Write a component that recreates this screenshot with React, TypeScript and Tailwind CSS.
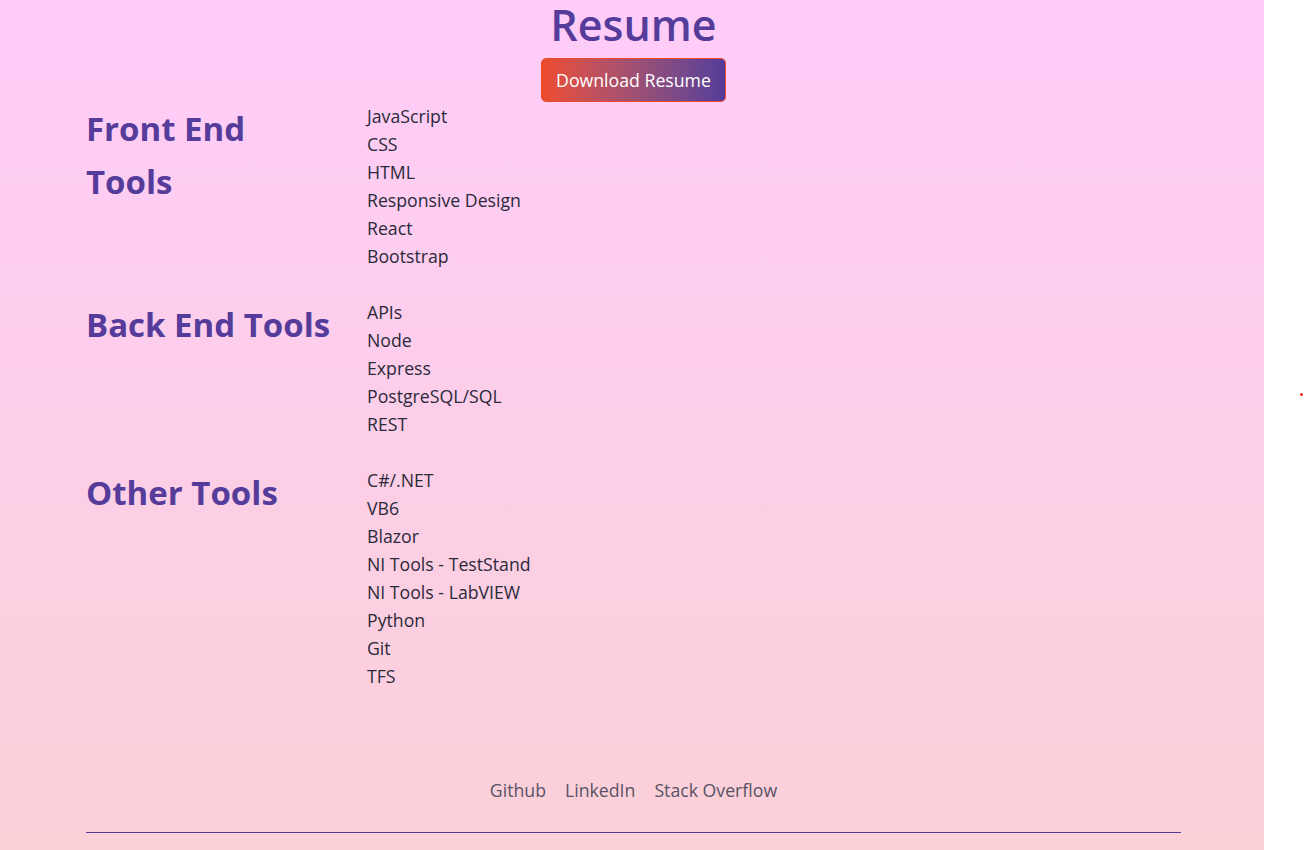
import React from 'react';

const sections = [
  {
    title: 'Front End Tools',
    items: ['JavaScript', 'CSS', 'HTML', 'Responsive Design', 'React', 'Bootstrap'],
  },
  {
    title: 'Back End Tools',
    items: ['APIs', 'Node', 'Express', 'PostgreSQL/SQL', 'REST'],
  },
  {
    title: 'Other Tools',
    items: ['C#/.NET', 'VB6', 'Blazor', 'NI Tools - TestStand', 'NI Tools - LabVIEW', 'Python', 'Git', 'TFS'],
  },
];

export default function App() {
  return (
    <div className="relative flex min-h-[850px] bg-white font-['Open_Sans',sans-serif]">
      <main className="w-[1264px] min-h-[850px] bg-gradient-to-b from-[#ffccf9] to-[#fbd0d7]">
        {/* Header */}
        <div className="flex flex-col items-center pl-[3px]">
          <h1 className="text-[43px] leading-[50px] font-semibold text-[#553c9a]">Resume</h1>
          <button className="mt-[8px] h-[44px] w-[185px] rounded-[5px] border border-[#f04a2d] bg-gradient-to-r from-[#ee4b2b] to-[#553c9a] text-[17.7px] text-white">
            Download Resume
          </button>
        </div>

        {/* Skills */}
        <div className="ml-[86px] w-[1095px]">
          {sections.map((s) => (
            <section key={s.title} className="flex mb-[28px]">
              <h2 className="w-[281px] shrink-0 text-[33px] leading-[53px] font-bold text-[#553c9a]">
                {s.title === 'Front End Tools' ? (
                  <>
                    Front End
                    <br />
                    Tools
                  </>
                ) : (
                  s.title
                )}
              </h2>
              <ul className="text-[17.7px] leading-[28px] text-[#2a2a3a]">
                {s.items.map((item) => (
                  <li key={item}>{item}</li>
                ))}
              </ul>
            </section>
          ))}

          {/* Footer */}
          <footer className="pt-[58px]">
            <div className="flex justify-center gap-[19px] text-[17.7px] leading-[28px] text-[#575366]">
              <a href="#">Github</a>
              <a href="#">LinkedIn</a>
              <a href="#">Stack Overflow</a>
            </div>
            <div className="mt-[28px] h-px bg-[#553c9a]" />
          </footer>
        </div>
      </main>
      <div className="absolute left-[1300px] top-[393px] h-[3px] w-[3px] rounded-full bg-[#ee1c1c]" />
    </div>
  );
}
